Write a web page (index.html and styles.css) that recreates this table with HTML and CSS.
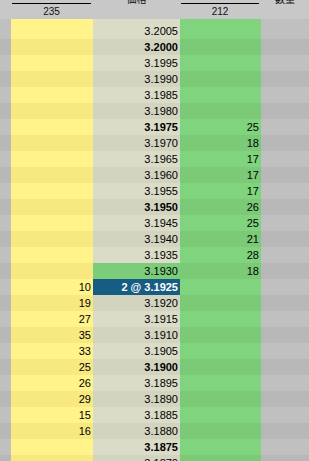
FILE: index.html
```html
<!DOCTYPE html>
<html lang="ja">
<head>
    <meta charset="UTF-8">
    <meta name="viewport" content="width=device-width, initial-scale=1.0">
    <title>板</title>
    <link rel="stylesheet" href="styles.css">
</head>
<body>
    <div class="ladder">
        <div class="head">
            <div></div>
            <div class="hcell total">235</div>
            <div class="hcell cut">価格</div>
            <div class="hcell total">212</div>
            <div class="hcell cut">数量</div>
        </div>
        <div id="rows"></div>
    </div>

<script>
    // price ladder: [price, bid qty, ask qty]
    const book = [
        ["3.2005", "", ""], ["3.2000", "", ""], ["3.1995", "", ""], ["3.1990", "", ""],
        ["3.1985", "", ""], ["3.1980", "", ""], ["3.1975", "", "25"], ["3.1970", "", "18"],
        ["3.1965", "", "17"], ["3.1960", "", "17"], ["3.1955", "", "17"], ["3.1950", "", "26"],
        ["3.1945", "", "25"], ["3.1940", "", "21"], ["3.1935", "", "28"], ["3.1930", "", "18"],
        ["3.1925", "10", ""], ["3.1920", "19", ""], ["3.1915", "27", ""], ["3.1910", "35", ""],
        ["3.1905", "33", ""], ["3.1900", "25", ""], ["3.1895", "26", ""], ["3.1890", "29", ""],
        ["3.1885", "15", ""], ["3.1880", "16", ""], ["3.1875", "", ""], ["3.1870", "", ""]
    ];
    const rows = document.getElementById('rows');
    book.forEach(function (r, i) {
        const row = document.createElement('div');
        row.className = 'row';
        const bold = Math.round(parseFloat(r[0]) * 10000) % 25 === 0;
        let priceClass = 'cell price' + (bold ? ' bold' : '');
        let priceText = r[0];
        if (r[0] === '3.1930') priceClass += ' best';
        if (r[0] === '3.1925') { priceClass += ' last'; priceText = '2 @ ' + r[0]; }
        row.innerHTML =
            '<div class="cell side"></div>' +
            '<div class="cell bid">' + r[1] + '</div>' +
            '<div class="' + priceClass + '">' + priceText + '</div>' +
            '<div class="cell ask">' + r[2] + '</div>' +
            '<div class="cell side"></div>';
        rows.appendChild(row);
    });
</script>
</body>
</html>
```

FILE: styles.css
```css
body {
    margin: 0;
    background-color: #c8c8c8;
    font-family: "Liberation Sans", Arial, "Noto Sans CJK JP", sans-serif;
    overflow: hidden;
}
.ladder {
    width: 309px;
}
.head, .row {
    display: grid;
    grid-template-columns: 11px 82px 87px 81px 1fr;
}
.head {
    height: 19px;
    overflow: hidden;
    background-color: #c8c8c8;
}
.hcell {
    font-size: 10px;
    text-align: center;
    color: #111;
}
.hcell.total {
    border-top: 1px solid #000;
    margin: 3px 2px 0 1px;
    padding-top: 2px;
    line-height: 11px;
}
.hcell.cut {
    margin-top: -6px;
    line-height: 12px;
}
.row {
    height: 16px;
    font-size: 11px;
    line-height: 16px;
}
.row:first-child {
    height: 20px;
    line-height: 24px;
}
.cell {
    text-align: right;
    padding-right: 2px;
    color: #000;
    white-space: nowrap;
}
.side { background-color: #c0c0c0; }
.bid { background-color: #fff38a; }
.price { background-color: #dadcc8; }
.ask { background-color: #80d47e; }
.row:nth-child(even) .side { background-color: #b8b8b8; }
.row:nth-child(even) .bid { background-color: #f7e880; }
.row:nth-child(even) .price { background-color: #d3d4c0; }
.row:nth-child(even) .ask { background-color: #7aca78; }
.bold { font-weight: bold; }
.row .price.best { background-color: #7ccd7a; }
.row .price.last {
    background-color: #175c82;
    color: #fff;
    font-weight: bold;
}
```
